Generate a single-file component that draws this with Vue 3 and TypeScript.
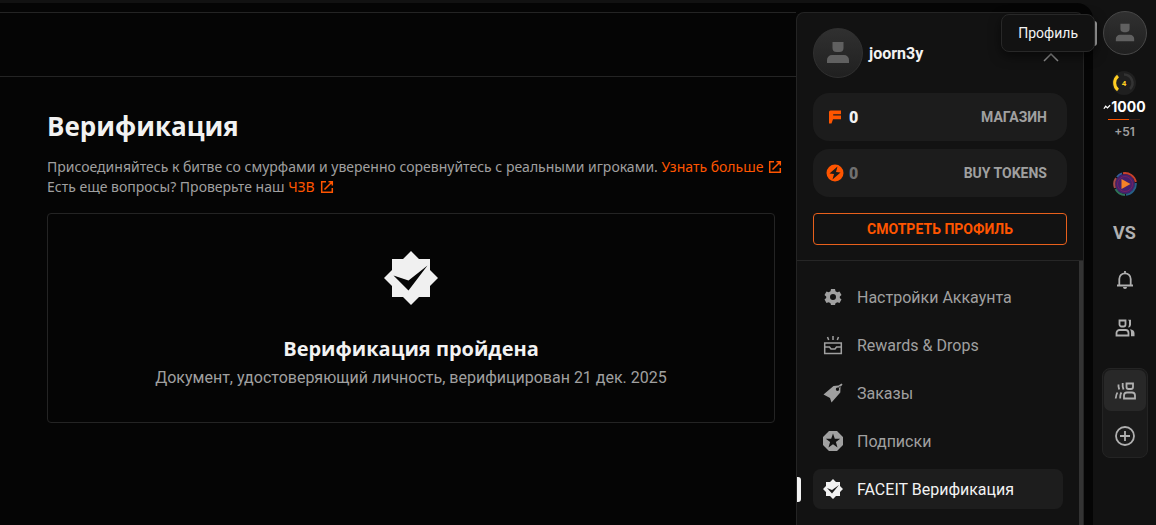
<script setup lang="ts">
import { ref } from 'vue'

interface MenuItem {
  id: string
  label: string
}

const menu: MenuItem[] = [
  { id: 'settings', label: 'Настройки Аккаунта' },
  { id: 'rewards', label: 'Rewards & Drops' },
  { id: 'orders', label: 'Заказы' },
  { id: 'subscriptions', label: 'Подписки' },
  { id: 'verification', label: 'FACEIT Верификация' },
]

const active = ref('verification')
</script>

<template>
  <div class="app">
    <div class="stage">
      <main class="content">
        <div class="topbar"></div>
        <div class="page">
          <h1>Верификация</h1>
          <p class="intro">
            Присоединяйтесь к битве со смурфами и уверенно соревнуйтесь с реальными игроками.
            <a href="#more">Узнать больше<svg class="ext" viewBox="0 0 14 14"><path d="M6 1.7H1.7v10.6h10.6V8M8.500 1.700h3.800V5.500M12 2 4.500 9.500" /></svg></a>
            <br />
            Есть еще вопросы? Проверьте наш
            <a href="#faq">ЧЗВ<svg class="ext" viewBox="0 0 14 14"><path d="M6 1.7H1.7v10.6h10.6V8M8.500 1.700h3.800V5.500M12 2 4.500 9.500" /></svg></a>
          </p>
          <section class="card">
            <svg class="badge" viewBox="0 0 54 54">
              <path fill="#f0f0f0" d="M27 0 35 8H46V19L54 27 46 35V46H35L27 54 19 46H8V35L0 27 8 19V8H19Z" />
              <path fill="#050505" d="M9.500 24.500 24.500 29.500 43.500 14.500 24.500 39.500Z" />
            </svg>
            <h2>Верификация пройдена</h2>
            <p>Документ, удостоверяющий личность, верифицирован 21 дек. 2025</p>
          </section>
        </div>
      </main>

      <aside class="panel">
        <div class="account">
          <div class="user">
            <span class="avatar">
              <svg viewBox="0 0 24 24"><path d="M6.500 1h11v6a4 4 0 0 1-4 4h-3a4 4 0 0 1-4-4ZM1 22v-3a5 5 0 0 1 5-5h12a5 5 0 0 1 5 5v3Z" /></svg>
            </span>
            <strong>joorn3y</strong>
            <button class="collapse" type="button" aria-label="Свернуть">
              <svg viewBox="0 0 16 10"><path d="M1 9 8 2l7 7" /></svg>
            </button>
          </div>
          <button class="wallet" type="button">
            <svg viewBox="0 0 18 18"><path fill="#ff5500" d="M4.500 2.500H15v3.700H7.200v1.300H15v3.700H7l-1.500 4.300H3V4a1.500 1.500 0 0 1 1.500-1.500Z" /></svg>
            <b>0</b>
            <span>МАГАЗИН</span>
          </button>
          <button class="wallet muted" type="button">
            <svg viewBox="0 0 18 18"><circle cx="9" cy="9" r="8.500" fill="#ff5500" /><path fill="#1c1c1c" d="M11.500 2.500 3.500 9.500 8 10 6.500 15.500 14.500 8.500 10 8Z" /></svg>
            <b>0</b>
            <span>BUY TOKENS</span>
          </button>
          <button class="view" type="button">СМОТРЕТЬ ПРОФИЛЬ</button>
        </div>
        <div class="scroller">
          <nav>
            <a
              v-for="item in menu"
              :key="item.id"
              :href="'#' + item.id"
              :class="{ active: active === item.id }"
              @click="active = item.id"
            >
              <svg v-if="item.id === 'settings'" viewBox="0 0 20 20">
                <path fill-rule="evenodd" d="M8 2h4l.5 2.200 1.800 1 2.200-.7 2 3.400-1.700 1.500v1.600l1.700 1.500-2 3.400-2.200-.7-1.800 1L12 18H8l-.5-1.800-1.800-1-2.200.7-2-3.400L3.200 11V9.400L1.500 7.900l2-3.400 2.200.7 1.800-1ZM10 7a3 3 0 1 0 0 6 3 3 0 0 0 0-6Z" />
              </svg>
              <svg v-else-if="item.id === 'rewards'" class="line" viewBox="0 0 20 20">
                <path d="M1.700 8h16.600v10.500H1.700ZM1.700 12h4.800l1.500 2h4l1.500-2h4.800M10 1v4M4.500 2l1.200 3M15.500 2l-1.200 3" />
              </svg>
              <svg v-else-if="item.id === 'orders'" viewBox="0 0 20 20">
                <path fill-rule="evenodd" d="M.5 11.500 10.500 3l5-.5L18.500.5l1 1L17.500 4l-.2 5.500-8.800 10-1.500-4.500ZM14.500 4.500a1.700 1.700 0 1 0 0 3.400 1.700 1.700 0 0 0 0-3.400Z" />
                <path class="cut" d="m14 6.500 3.500-3.500" />
              </svg>
              <svg v-else-if="item.id === 'subscriptions'" viewBox="0 0 20 20">
                <path fill-rule="evenodd" d="M6 0h8l6 6v8l-6 6H6l-6-6V6ZM10 2.500 8.200 7.700H2.800l4.300 3.400-1.600 5.400 4.500-3.200 4.500 3.200-1.600-5.400 4.300-3.400h-5.400Z" />
              </svg>
              <svg v-else viewBox="0 0 20 20">
                <path fill-rule="evenodd" d="m10 0 3 3h4v4l3 3-3 3v4h-4l-3 3-3-3H3v-4l-3-3 3-3V3h4ZM4 9l5 5.500L16 6l-7 5Z" />
              </svg>
              <span>{{ item.label }}</span>
            </a>
          </nav>
          <div class="thumb"></div>
        </div>
      </aside>
    </div>

    <aside class="rail">
      <button class="avatar small" type="button" aria-label="Профиль">
        <svg viewBox="0 0 24 24"><path d="M6.500 1h11v6a4 4 0 0 1-4 4h-3a4 4 0 0 1-4-4ZM1 22v-3a5 5 0 0 1 5-5h12a5 5 0 0 1 5 5v3Z" /></svg>
      </button>
      <div class="tooltip" role="tooltip">Профиль</div>
      <div class="elo">
        <svg viewBox="0 0 24 24">
          <circle cx="12" cy="12" r="12" fill="#1f1f1f" />
          <path fill="none" stroke="#333" stroke-width="2.500" d="M12 3.500a8.500 8.500 0 0 1 6 14.500" />
          <path fill="none" stroke="#ffcd22" stroke-width="3" d="M6 5a9 9 0 0 0 0 14" />
          <text x="12" y="15" text-anchor="middle">4</text>
        </svg>
        <div class="rating"><svg viewBox="0 0 9 8"><path d="M1 6 3 3l2 2 3-3" /></svg>1000</div>
        <div class="progress"><i></i></div>
        <div class="delta">+51</div>
      </div>
      <div class="links">
        <button type="button" aria-label="Миссии">
          <svg class="disc" viewBox="0 0 24 24">
            <circle cx="12" cy="12" r="10" fill="#45206c" />
            <g fill="none" stroke-width="2">
              <path stroke="#c8402c" d="M10 1.200A11 11 0 0 1 22.800 10" />
              <path stroke="#275f86" d="M22.800 11A11 11 0 0 1 13 22.800" />
              <path stroke="#2e7358" d="M12 22.900A11 11 0 0 1 2.500 17" />
              <path stroke="#a44b48" d="M2 16A11 11 0 0 1 3 6" />
              <path stroke="#345c99" d="M4 5a11 11 0 0 1 5-3.600" />
              <circle cx="12" cy="12" r="7.500" stroke="#752061" stroke-width="1" />
            </g>
            <path fill="#f58227" d="m8.500 7 9 5-9 5Z" />
          </svg>
        </button>
        <button class="vs" type="button">VS</button>
        <button type="button" aria-label="Уведомления">
          <svg class="line" viewBox="0 0 20 20"><path d="M2 15.500h16M4.300 15.500V9a5.700 5.700 0 0 1 11.400 0v6.500M10 3V1" /><path class="solid" d="M8 17h4a2 2 0 0 1-4 0Z" /></svg>
        </button>
        <button type="button" aria-label="Друзья">
          <svg class="line" viewBox="0 0 20 20"><path d="M4.500 2.500h6v4a2 2 0 0 1-2 2H6.500a2 2 0 0 1-2-2ZM1.500 17.500V15a3 3 0 0 1 3-3h6a3 3 0 0 1 3 3v2.500Z" /><path class="solid" d="M13 1.700h3V7a3 3 0 0 1-3 2.500 5 5 0 0 0 1-3V3ZM15 11.200c3 .2 4.500 2 4.500 4v3H16V15c0-1.500-.2-2.500-1-3.800Z" /></svg>
        </button>
      </div>
      <div class="group">
        <button class="on" type="button" aria-label="Пати">
          <svg class="line" viewBox="0 0 22 20"><path d="M12.500 2.500H19V6a2 2 0 0 1-2 2h-2.500a2 2 0 0 1-2-2ZM10 17.500v-3a3 3 0 0 1 3-3h5a3 3 0 0 1 3 3v3ZM8.700 2v3.500l.8 3M4.500 3.500v2l.7 3M7.500 11.500c-1 1-1.300 3-1.300 6M3.500 11.500C2.300 12.800 2 14.500 1.700 17.500" /></svg>
        </button>
        <button type="button" aria-label="Добавить">
          <svg class="line" viewBox="0 0 20 20"><circle cx="10" cy="10" r="9" /><path d="M10 5v10M5 10h10" /></svg>
        </button>
      </div>
    </aside>
  </div>
</template>

<style>
html,
body {
  margin: 0;
  background: #121212;
}
</style>

<style scoped>
.app {
  display: flex;
  height: 100vh;
  overflow: hidden;
  background: #121212;
  color: #f2f2f2;
  font-family: Roboto, "Noto Sans", sans-serif;
}
* {
  box-sizing: border-box;
}
h1,
h2,
p {
  margin: 0;
}
h1,
h2 {
  font-family: "Open Sans", "Noto Sans", sans-serif;
}
button {
  padding: 0;
  border: 0;
  background: none;
  color: inherit;
  font: inherit;
}
a {
  text-decoration: none;
}
.stage {
  display: flex;
  flex: 1;
  min-width: 0;
  margin-top: 3px;
  padding: 9px 9px 0 0;
  border-radius: 0 16px 0 0;
  background: #050505;
}
.content {
  flex: 1;
  min-width: 0;
  border-top: 1px solid #242424;
}
.topbar {
  height: 64px;
  border-bottom: 1px solid #242424;
}
.page {
  padding: 32px 21px 0 47px;
}
h1 {
  font-size: 26px;
  line-height: 34px;
}
.intro {
  margin-top: 14px;
  color: #a0a0a0;
  font-family: "Noto Sans", sans-serif;
  font-size: 14px;
  line-height: 20px;
  white-space: nowrap;
}
.intro a {
  color: #ff5500;
}
.ext {
  width: 14px;
  height: 14px;
  margin-left: 5px;
  vertical-align: -2px;
  fill: none;
  stroke: #ff5500;
  stroke-width: 1.5;
}
.card {
  display: flex;
  flex-direction: column;
  align-items: center;
  height: 210px;
  margin-top: 16px;
  padding-top: 37px;
  border: 1px solid #242424;
  border-radius: 4px;
}
.badge {
  width: 54px;
  height: 54px;
}
h2 {
  margin-top: 30px;
  font-size: 20px;
  line-height: 28px;
}
.card p {
  margin-top: 3px;
  color: #a0a0a0;
  font-size: 16px;
  line-height: 24px;
}
.panel {
  display: flex;
  flex-direction: column;
  width: 288px;
  border: 1px solid #242424;
  border-bottom: 0;
  border-radius: 8px 8px 0 0;
  background: #121212;
}
.account {
  display: flex;
  flex-direction: column;
  gap: 8px;
  padding: 15px 16px;
  border-bottom: 1px solid #262626;
}
.user {
  display: flex;
  align-items: center;
  height: 50px;
  margin-bottom: 7px;
  gap: 6px;
}
.avatar {
  display: flex;
  align-items: center;
  justify-content: center;
  width: 50px;
  height: 50px;
  border: 1px solid #303030;
  border-radius: 50%;
  background: linear-gradient(#303030, #202020);
}
.avatar svg {
  width: 24px;
  height: 24px;
  fill: #606060;
}
.avatar.small {
  width: 44px;
  height: 44px;
  border-color: #484848;
}
.avatar.small svg {
  width: 20px;
  height: 20px;
}
.user strong {
  font-size: 16px;
}
.collapse {
  display: flex;
  margin: 8px 8px 0 auto;
}
.collapse svg {
  width: 16px;
  height: 10px;
  fill: none;
  stroke: #909090;
  stroke-width: 1.5;
}
.wallet {
  display: flex;
  align-items: center;
  height: 48px;
  padding: 0 20px 0 13px;
  gap: 5px;
  border-radius: 16px;
  background: #1c1c1c;
  font-weight: 700;
}
.wallet svg {
  width: 18px;
  height: 18px;
}
.wallet b {
  font-size: 16px;
}
.wallet span {
  margin-left: auto;
  color: #a0a0a0;
  font-size: 14px;
}
.wallet.muted b {
  color: #707070;
}
.view {
  height: 32px;
  margin-top: 8px;
  border: 1px solid #e8601c;
  border-radius: 4px;
  color: #ff5500;
  font-size: 14px;
  font-weight: 700;
}
.scroller {
  display: flex;
  flex: 1;
  min-height: 0;
}
nav {
  display: flex;
  flex: 1;
  flex-direction: column;
  gap: 8px;
  padding: 16px 16px 0;
}
nav a {
  display: flex;
  position: relative;
  flex: none;
  align-items: center;
  height: 40px;
  padding-left: 10px;
  gap: 14px;
  border-radius: 8px;
  color: #a0a0a0;
  font-size: 16px;
  white-space: nowrap;
}
nav a.active {
  background: #1d1d1d;
  color: #f2f2f2;
}
nav a.active::before {
  content: "";
  position: absolute;
  top: 8px;
  left: -16px;
  width: 4px;
  height: 25px;
  border-radius: 0 3px 3px 0;
  background: #f2f2f2;
}
nav svg {
  width: 20px;
  height: 20px;
  fill: currentColor;
}
nav svg.line,
.line {
  fill: none;
  stroke: currentColor;
  stroke-width: 1.8;
}
nav svg.line {
  stroke-width: 1.5;
}
.cut {
  stroke: #121212;
  stroke-width: 1;
}
.thumb {
  width: 4px;
  background: #333;
}
.rail {
  display: flex;
  position: relative;
  flex: none;
  flex-direction: column;
  align-items: center;
  width: 63px;
  padding-top: 11px;
  color: #b0b0b0;
}
.rail::before {
  content: "";
  position: absolute;
  top: 21px;
  left: 1px;
  width: 3px;
  height: 25px;
  border-radius: 0 3px 3px 0;
  background: #aaa;
}
.tooltip {
  position: absolute;
  top: 14px;
  right: 61px;
  padding: 0 16px;
  border: 1px solid #282828;
  border-radius: 8px;
  background: #121212;
  box-shadow: 0 4px 12px #0008;
  color: #f2f2f2;
  font-size: 14px;
  line-height: 36px;
}
.elo {
  display: flex;
  flex-direction: column;
  align-items: center;
  margin-top: 16px;
}
.elo > svg {
  width: 24px;
  height: 24px;
}
.elo text {
  fill: #ffcd22;
  font-size: 8px;
  font-weight: 700;
}
.rating {
  display: flex;
  align-items: center;
  margin-top: 4px;
  color: #fff;
  font: 700 14px/16px Inter, sans-serif;
}
.rating svg {
  width: 8px;
  height: 8px;
  fill: none;
  stroke: #fff;
  stroke-width: 1.4;
}
.progress {
  display: flex;
  width: 32px;
  height: 1px;
  margin-top: 4px;
  background: #402014;
}
.progress i {
  width: 65%;
  background: #ff5500;
}
.delta {
  margin-top: 4px;
  color: #a0a0a0;
  font: 600 12px/16px Inter, sans-serif;
}
.links {
  display: flex;
  flex-direction: column;
  margin-top: 20px;
}
.links button {
  display: flex;
  align-items: center;
  justify-content: center;
  width: 48px;
  height: 48px;
}
.links svg {
  width: 20px;
  height: 20px;
}
.links .disc {
  width: 24px;
  height: 24px;
}
.links .vs {
  font-size: 18px;
  font-weight: 700;
}
.solid {
  fill: currentColor;
  stroke: none;
}
.group {
  display: flex;
  flex-direction: column;
  gap: 4px;
  margin-top: 16px;
  padding: 1px;
  border: 1px solid #242424;
  border-radius: 8px;
  background: #1a1a1a;
}
.group button {
  display: flex;
  align-items: center;
  justify-content: center;
  width: 42px;
  height: 41px;
  border-radius: 7px;
}
.group .on {
  background: #282828;
}
.group svg {
  width: 22px;
  height: 20px;
}
</style>
